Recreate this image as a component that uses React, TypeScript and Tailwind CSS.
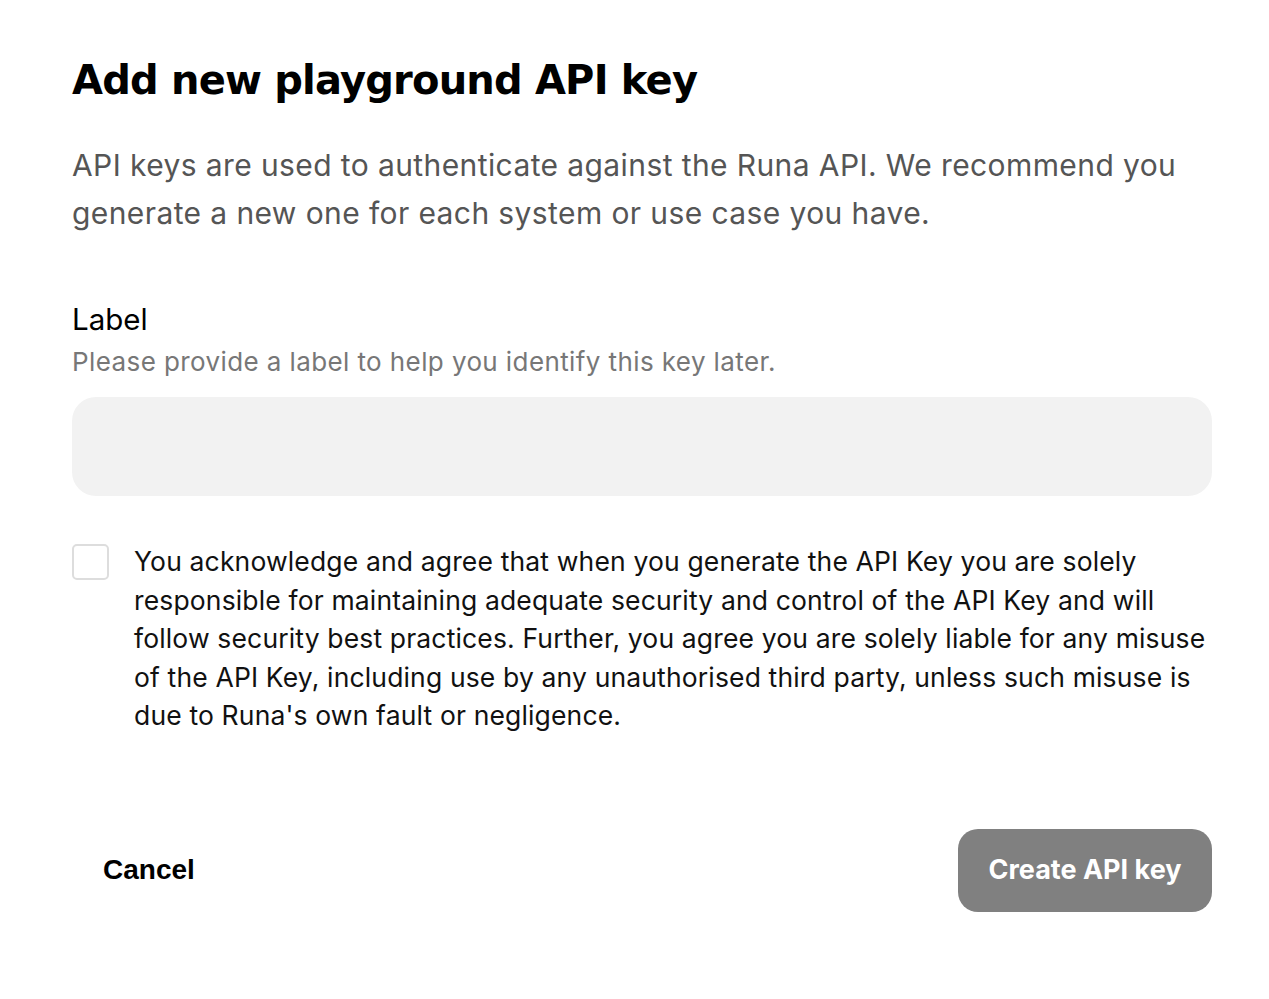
import React, { useState } from 'react';

const App: React.FC = () => {
  const [label, setLabel] = useState('');
  const [agreed, setAgreed] = useState(false);

  return (
    <div className="min-h-screen bg-white">
      <div className="w-[1140px] ml-[72px] pt-[52px]" style={{ fontFamily: 'Inter, "Noto Sans", sans-serif' }}>
        <h1
          className="text-[40px] leading-[56px] font-bold text-black tracking-[-0.8px]"
          style={{ fontFamily: '"DejaVu Sans", Arial, sans-serif' }}
        >
          Add new playground API key
        </h1>

        <p className="mt-[33px] text-[30px] leading-[48px] tracking-[0.4px] text-[#555555]">
          API keys are used to authenticate against the Runa API. We recommend you generate a new one for each system or
          use case you have.
        </p>

        <div className="mt-[62px]">
          <label className="block text-[29.5px] leading-[40px] text-black">Label</label>
          <p className="mt-[5px] text-[26px] leading-[36px] tracking-[0.4px] text-[#777777]">
            Please provide a label to help you identify this key later.
          </p>
          <input
            value={label}
            onChange={(e) => setLabel(e.target.value)}
            className="mt-[17px] block w-full h-[99px] rounded-[24px] bg-[#f2f2f2] px-6 text-[26px] outline-none"
          />
        </div>

        {/* Agreement */}
        <div className="mt-[47px] flex gap-[25px]">
          <button
            onClick={() => setAgreed(!agreed)}
            className={`mt-[1px] w-[37px] h-[36px] shrink-0 rounded-[5px] border-2 ${agreed ? 'border-black bg-black' : 'border-[#dddddd] bg-white'}`}
          />
          <p className="text-[26.5px] leading-[38.5px] tracking-[0.15px] text-[#111111] mt-[-1px]">
            You acknowledge and agree that when you generate the API Key you are solely responsible for maintaining adequate
            security and control of the API Key and will follow security best practices. Further, you agree you are solely
            liable for any misuse of the API Key, including use by any unauthorised third party, unless such misuse is due
            to Runa's own fault or negligence.
          </p>
        </div>

        <div className="mt-[94px] flex items-center justify-between">
          <button
            className="ml-[31px] text-[28px] font-bold text-black"
            style={{ fontFamily: '"Liberation Sans", Arial, sans-serif' }}
          >
            Cancel
          </button>
          <button
            disabled={!agreed || !label}
            className="w-[254px] h-[83px] rounded-[20px] bg-[#808080] text-[27px] font-bold text-white"
          >
            Create API key
          </button>
        </div>
      </div>
    </div>
  );
};

export default App;
